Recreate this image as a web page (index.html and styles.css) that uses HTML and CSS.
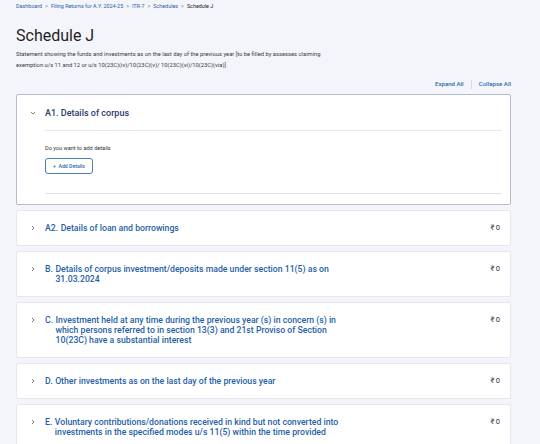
FILE: index.html
```html
<!DOCTYPE html>
<html lang="en">
<head>
<meta charset="utf-8">
<title>Schedule J</title>
<link rel="stylesheet" href="styles.css">
</head>
<body>
<div class="page">
  <nav class="crumbs">
    <a>Dashboard</a><span class="sep">&gt;</span><a>Filing Returns for A.Y. 2024-25</a><span class="sep">&gt;</span><a>ITR-7</a><span class="sep">&gt;</span><a>Schedules</a><span class="sep">&gt;</span><span class="cur">Schedule J</span>
  </nav>
  <h1 class="title">Schedule J</h1>
  <p class="desc">Statement showing the funds and investments as on the last day of the previous year [to be filled by assesses claiming<br>exemption u/s 11 and 12 or u/s 10(23C)(iv)/10(23C)(v)/ 10(23C)(vi)/10(23C)(via)]</p>
  <div class="actions"><a>Expand All</a><span class="bar"></span><a>Collapse All</a></div>

  <div class="list">
    <section class="card open">
      <div class="head">
        <svg class="chev" viewBox="0 0 6 6"><polyline points="1,2 3,4 5,2"/></svg>
        <span class="open-title">A1. Details of corpus</span>
      </div>
      <div class="body">
        <p class="ask">Do you want to add details</p>
        <button class="add">+&nbsp; Add Details</button>
      </div>
    </section>

    <section class="card">
      <svg class="chev" viewBox="0 0 6 6"><polyline points="2,1 4,3 2,5"/></svg>
      <div class="label"><span class="no">A2.</span><span>Details of loan and borrowings</span></div>
      <span class="amt">₹&#8201;0</span>
    </section>

    <section class="card">
      <svg class="chev" viewBox="0 0 6 6"><polyline points="2,1 4,3 2,5"/></svg>
      <div class="label"><span class="no">B.</span><span>Details of corpus investment/deposits made under section 11(5) as on 31.03.2024</span></div>
      <span class="amt">₹&#8201;0</span>
    </section>

    <section class="card">
      <svg class="chev" viewBox="0 0 6 6"><polyline points="2,1 4,3 2,5"/></svg>
      <div class="label"><span class="no">C.</span><span>Investment held at any time during the previous year (s) in concern (s) in which persons referred to in section 13(3) and 21st Proviso of Section 10(23C) have a substantial interest</span></div>
      <span class="amt">₹&#8201;0</span>
    </section>

    <section class="card">
      <svg class="chev" viewBox="0 0 6 6"><polyline points="2,1 4,3 2,5"/></svg>
      <div class="label"><span class="no">D.</span><span>Other investments as on the last day of the previous year</span></div>
      <span class="amt">₹&#8201;0</span>
    </section>

    <section class="card">
      <svg class="chev" viewBox="0 0 6 6"><polyline points="2,1 4,3 2,5"/></svg>
      <div class="label"><span class="no">E.</span><span>Voluntary contributions/donations received in kind but not converted into investments in the specified modes u/s 11(5) within the time provided</span></div>
      <span class="amt">₹&#8201;0</span>
    </section>
  </div>
</div>
</body>
</html>
```

FILE: styles.css
```css
html, body {
  margin: 0;
  padding: 0;
  background: #f4f5fa;
  font-family: Roboto, "Noto Sans", "Liberation Sans", sans-serif;
  color: #222;
}

.page {
  padding: 2px 29px 0 16px;
}

.crumbs {
  font-size: 5.4px;
  line-height: 8px;
  display: flex;
  align-items: center;
}
.crumbs a { color: #2a5ea8; }
.crumbs .sep { color: #777; margin: 0 3px; }
.crumbs .cur { color: #222; }

.title {
  font-size: 16px;
  font-weight: 400;
  margin: 15px 0 0;
  line-height: 22px;
  color: #1e1e1e;
}

.desc {
  font-size: 5.8px;
  line-height: 11px;
  margin: 2px 0 0;
  color: #3a3a3a;
}

.actions {
  display: flex;
  justify-content: flex-end;
  align-items: center;
  margin-top: 8px;
  font-size: 6.1px;
  font-weight: 500;
  line-height: 10px;
  color: #2d6bb0;
}
.actions .bar {
  width: 1px;
  height: 9px;
  background: #d6dae6;
  margin: 0 7px;
}

.list {
  display: flex;
  flex-direction: column;
  gap: 5px;
  margin-top: 5px;
}

.card {
  background: #fff;
  border: 1px solid #e6e8ef;
  border-radius: 2px;
  display: flex;
  align-items: flex-start;
  padding: 12px 10px 12px 13px;
}

.chev {
  width: 6px;
  height: 6px;
  flex: none;
  margin-top: 2px;
  margin-right: 9px;
  fill: none;
  stroke: #707070;
  stroke-width: 0.9;
}

.label {
  flex: 1;
  display: flex;
  font-size: 8.7px;
  font-weight: 500;
  line-height: 10px;
  color: #1f5fa8;
  padding-right: 146px;
}
.label .no { flex: none; margin-right: 2.5px; }

.amt {
  font-size: 7.5px;
  line-height: 10px;
  color: #333;
  flex: none;
}

.card.open {
  display: block;
  border-color: #b6bacb;
  padding: 0 8px 10px 13px;
}
.card.open .head {
  display: flex;
  align-items: center;
  height: 35px;
}
.card.open .chev { margin-top: 0; }
.open-title {
  font-size: 9px;
  font-weight: 500;
  color: #2c3a6b;
}
.card.open .body {
  margin-left: 15px;
  border-top: 1px solid #e6e8ee;
  border-bottom: 1px solid #dfe2e8;
  padding: 13px 0 19px;
}
.ask {
  margin: 0;
  font-size: 5.6px;
  line-height: 8px;
  color: #333;
}
.add {
  margin-top: 6px;
  font-family: inherit;
  font-size: 5.2px;
  font-weight: 500;
  color: #2d6bb0;
  background: #fff;
  border: 1px solid #4a7fbf;
  border-radius: 3px;
  height: 16px;
  padding: 0 7px;
}
```
